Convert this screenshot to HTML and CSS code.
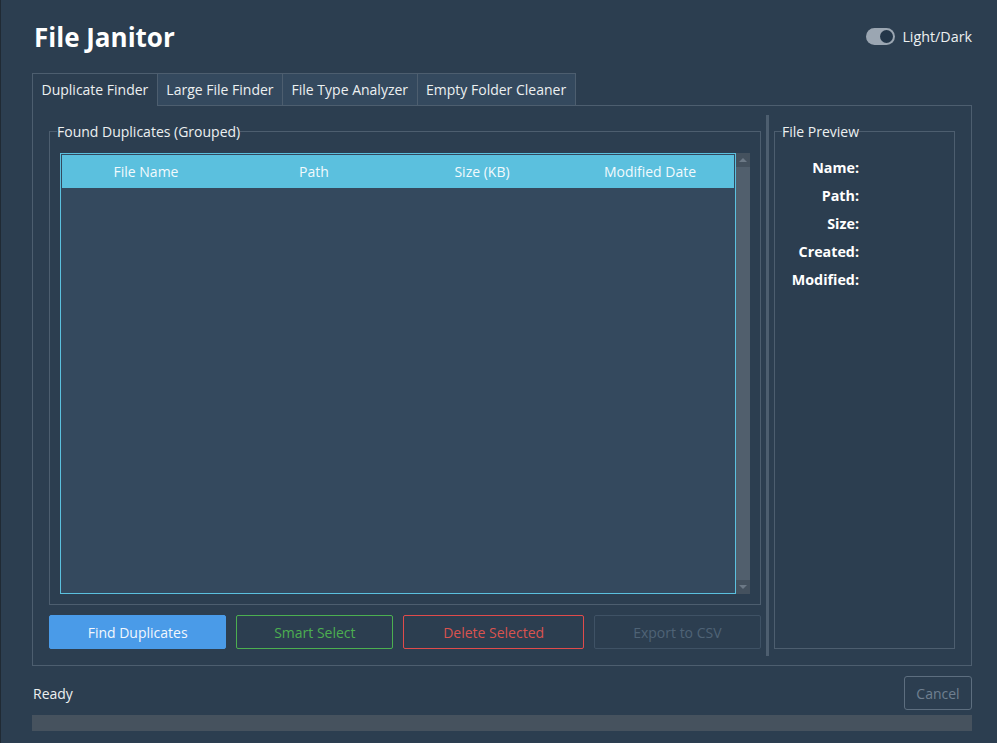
FILE: index.html
```html
<!DOCTYPE html>
<html lang="en">
<head>
<meta charset="utf-8">
<title>File Janitor</title>
<link rel="stylesheet" href="styles.css">
</head>
<body>
<div class="window">
  <header class="topbar">
    <h1 class="title">File Janitor</h1>
    <div class="theme-toggle">
      <span class="switch"><span class="knob"></span></span>
      <span class="toggle-label">Light/Dark</span>
    </div>
  </header>

  <nav class="tabs">
    <div class="tab active">Duplicate Finder</div>
    <div class="tab">Large File Finder</div>
    <div class="tab">File Type Analyzer</div>
    <div class="tab">Empty Folder Cleaner</div>
  </nav>

  <section class="pane">
    <div class="left">
      <fieldset class="group dup-group">
        <legend>Found Duplicates (Grouped)</legend>
        <div class="table-wrap">
          <div class="table">
            <div class="thead">
              <span>File Name</span>
              <span>Path</span>
              <span>Size (KB)</span>
              <span>Modified Date</span>
            </div>
            <div class="tbody"></div>
          </div>
          <div class="scrollbar">
            <div class="sb-btn up"></div>
            <div class="sb-track"></div>
            <div class="sb-btn down"></div>
          </div>
        </div>
      </fieldset>
      <div class="actions">
        <button class="btn btn-primary">Find Duplicates</button>
        <button class="btn btn-success">Smart Select</button>
        <button class="btn btn-danger">Delete Selected</button>
        <button class="btn btn-disabled">Export to CSV</button>
      </div>
    </div>
    <div class="splitter"></div>
    <fieldset class="group preview">
      <legend>File Preview</legend>
      <div class="form">
        <span class="label">Name:</span><span class="value"></span>
        <span class="label">Path:</span><span class="value"></span>
        <span class="label">Size:</span><span class="value"></span>
        <span class="label">Created:</span><span class="value"></span>
        <span class="label">Modified:</span><span class="value"></span>
      </div>
    </fieldset>
  </section>

  <footer class="status">
    <span class="status-text">Ready</span>
    <button class="cancel">Cancel</button>
  </footer>
  <div class="progress"></div>
</div>
</body>
</html>
```

FILE: styles.css
```css
* { box-sizing: border-box; }
html, body { margin: 0; }
body {
  background: #2c3e50;
  font-family: "Open Sans", "Noto Sans", sans-serif;
  font-size: 14px;
  color: #ecf0f1;
  width: 997px;
  height: 743px;
  overflow: hidden;
}
.window {
  height: 743px;
  padding: 0 25px 0 32px;
  box-shadow: inset 1px 0 0 #202a34;
  display: flex;
  flex-direction: column;
}
.topbar {
  height: 73px;
  flex: 0 0 73px;
  display: flex;
  align-items: center;
  justify-content: space-between;
}
.title {
  margin: 0;
  font-size: 26px;
  font-weight: 700;
  line-height: 1;
  color: #ffffff;
  padding: 0 0 0 2px;
}
.theme-toggle {
  display: flex;
  align-items: center;
  gap: 7px;
  font-size: 14.3px;
  color: #ecf0f1;
}
.switch {
  width: 29px;
  height: 17px;
  border-radius: 9px;
  background: #9ba6b2;
  padding: 2px;
  display: flex;
  justify-content: flex-end;
}
.knob {
  width: 13px;
  height: 13px;
  border-radius: 50%;
  background: #233649;
}

.tabs {
  display: flex;
  height: 32px;
  flex: 0 0 32px;
}
.tab {
  padding: 0 8.5px;
  line-height: 31px;
  height: 32px;
  border-top: 1px solid #4d5e6f;
  border-left: 1px solid #4d5e6f;
  background: #34495e;
  color: #ecf0f1;
  white-space: nowrap;
}
.tab:last-child { border-right: 1px solid #4d5e6f; }
.tab.active {
  background: #2c3e50;
  height: 33px;
  position: relative;
  z-index: 1;
}

.pane {
  height: 561px;
  flex: 0 0 561px;
  border: 1px solid #4d5e6f;
  padding: 16px;
  display: flex;
}
.left {
  width: 712px;
  flex: 0 0 712px;
  display: flex;
  flex-direction: column;
}
.group {
  margin: 0;
  border: 1px solid #4d5e6f;
  padding: 12px 10px 10px;
  min-width: 0;
}
.group legend {
  padding: 0;
  margin-left: -3px;
  font-size: 14px;
  line-height: 19px;
  color: #ecf0f1;
}
.dup-group {
  flex: 1;
  min-height: 0;
  display: flex;
  flex-direction: column;
}
.table-wrap {
  flex: 1;
  display: flex;
  min-height: 0;
}
.table {
  flex: 1;
  border: 1px solid #5bc0de;
  padding: 1px;
  background: #34495e;
  display: flex;
  flex-direction: column;
}
.thead {
  height: 33px;
  background: #5bc0de;
  display: grid;
  grid-template-columns: repeat(4, 1fr);
  align-items: center;
  text-align: center;
  color: #f2fafd;
}
.tbody { flex: 1; }
.scrollbar {
  width: 14px;
  display: flex;
  flex-direction: column;
  background: #515f6d;
}
.sb-btn {
  height: 14px;
  background: #44515e;
  display: flex;
  align-items: center;
  justify-content: center;
}
.sb-btn::before {
  content: "";
  width: 0;
  height: 0;
  border-left: 4px solid transparent;
  border-right: 4px solid transparent;
}
.sb-btn.up::before { border-bottom: 4px solid #6c7986; }
.sb-btn.down::before { border-top: 4px solid #6c7986; }
.sb-track { flex: 1; }

.actions {
  margin-top: 10px;
  height: 34px;
  flex: 0 0 34px;
  display: grid;
  grid-template-columns: 177fr 157fr 180fr 167fr;
  gap: 10px;
}
.btn {
  border: 1px solid transparent;
  border-radius: 2px;
  background: transparent;
  font-family: inherit;
  font-size: 14px;
  padding: 0;
}
.btn-primary { background: #4a9be8; border-color: #4a9be8; color: #f2f7fd; }
.btn-success { border-color: #4caf50; color: #4caf50; }
.btn-danger { border-color: #e04b4b; color: #d9534f; }
.btn-disabled { border-color: #3f5265; color: #4f6376; }

.splitter {
  width: 3px;
  flex: 0 0 3px;
  margin: -7px 5px;
  background: #4d5e6f;
}
.preview {
  flex: 1;
  padding: 12px 10px;
}
.form {
  display: grid;
  grid-template-columns: 74px 1fr;
  grid-auto-rows: 28px;
  align-items: center;
}
.label {
  font-weight: 700;
  font-size: 14.3px;
  text-align: right;
  color: #ffffff;
}

.status {
  margin-top: 10px;
  height: 34px;
  flex: 0 0 34px;
  display: flex;
  justify-content: space-between;
  align-items: center;
}
.status-text { padding-left: 1px; color: #ecf0f1; }
.cancel {
  width: 68px;
  height: 34px;
  border: 1px solid #5d6e7f;
  border-radius: 3px;
  background: transparent;
  color: #6f8091;
  font-family: inherit;
  font-size: 14px;
  padding: 0;
}
.progress {
  margin-top: 5px;
  height: 16px;
  flex: 0 0 16px;
  background: #46525e;
}
```
